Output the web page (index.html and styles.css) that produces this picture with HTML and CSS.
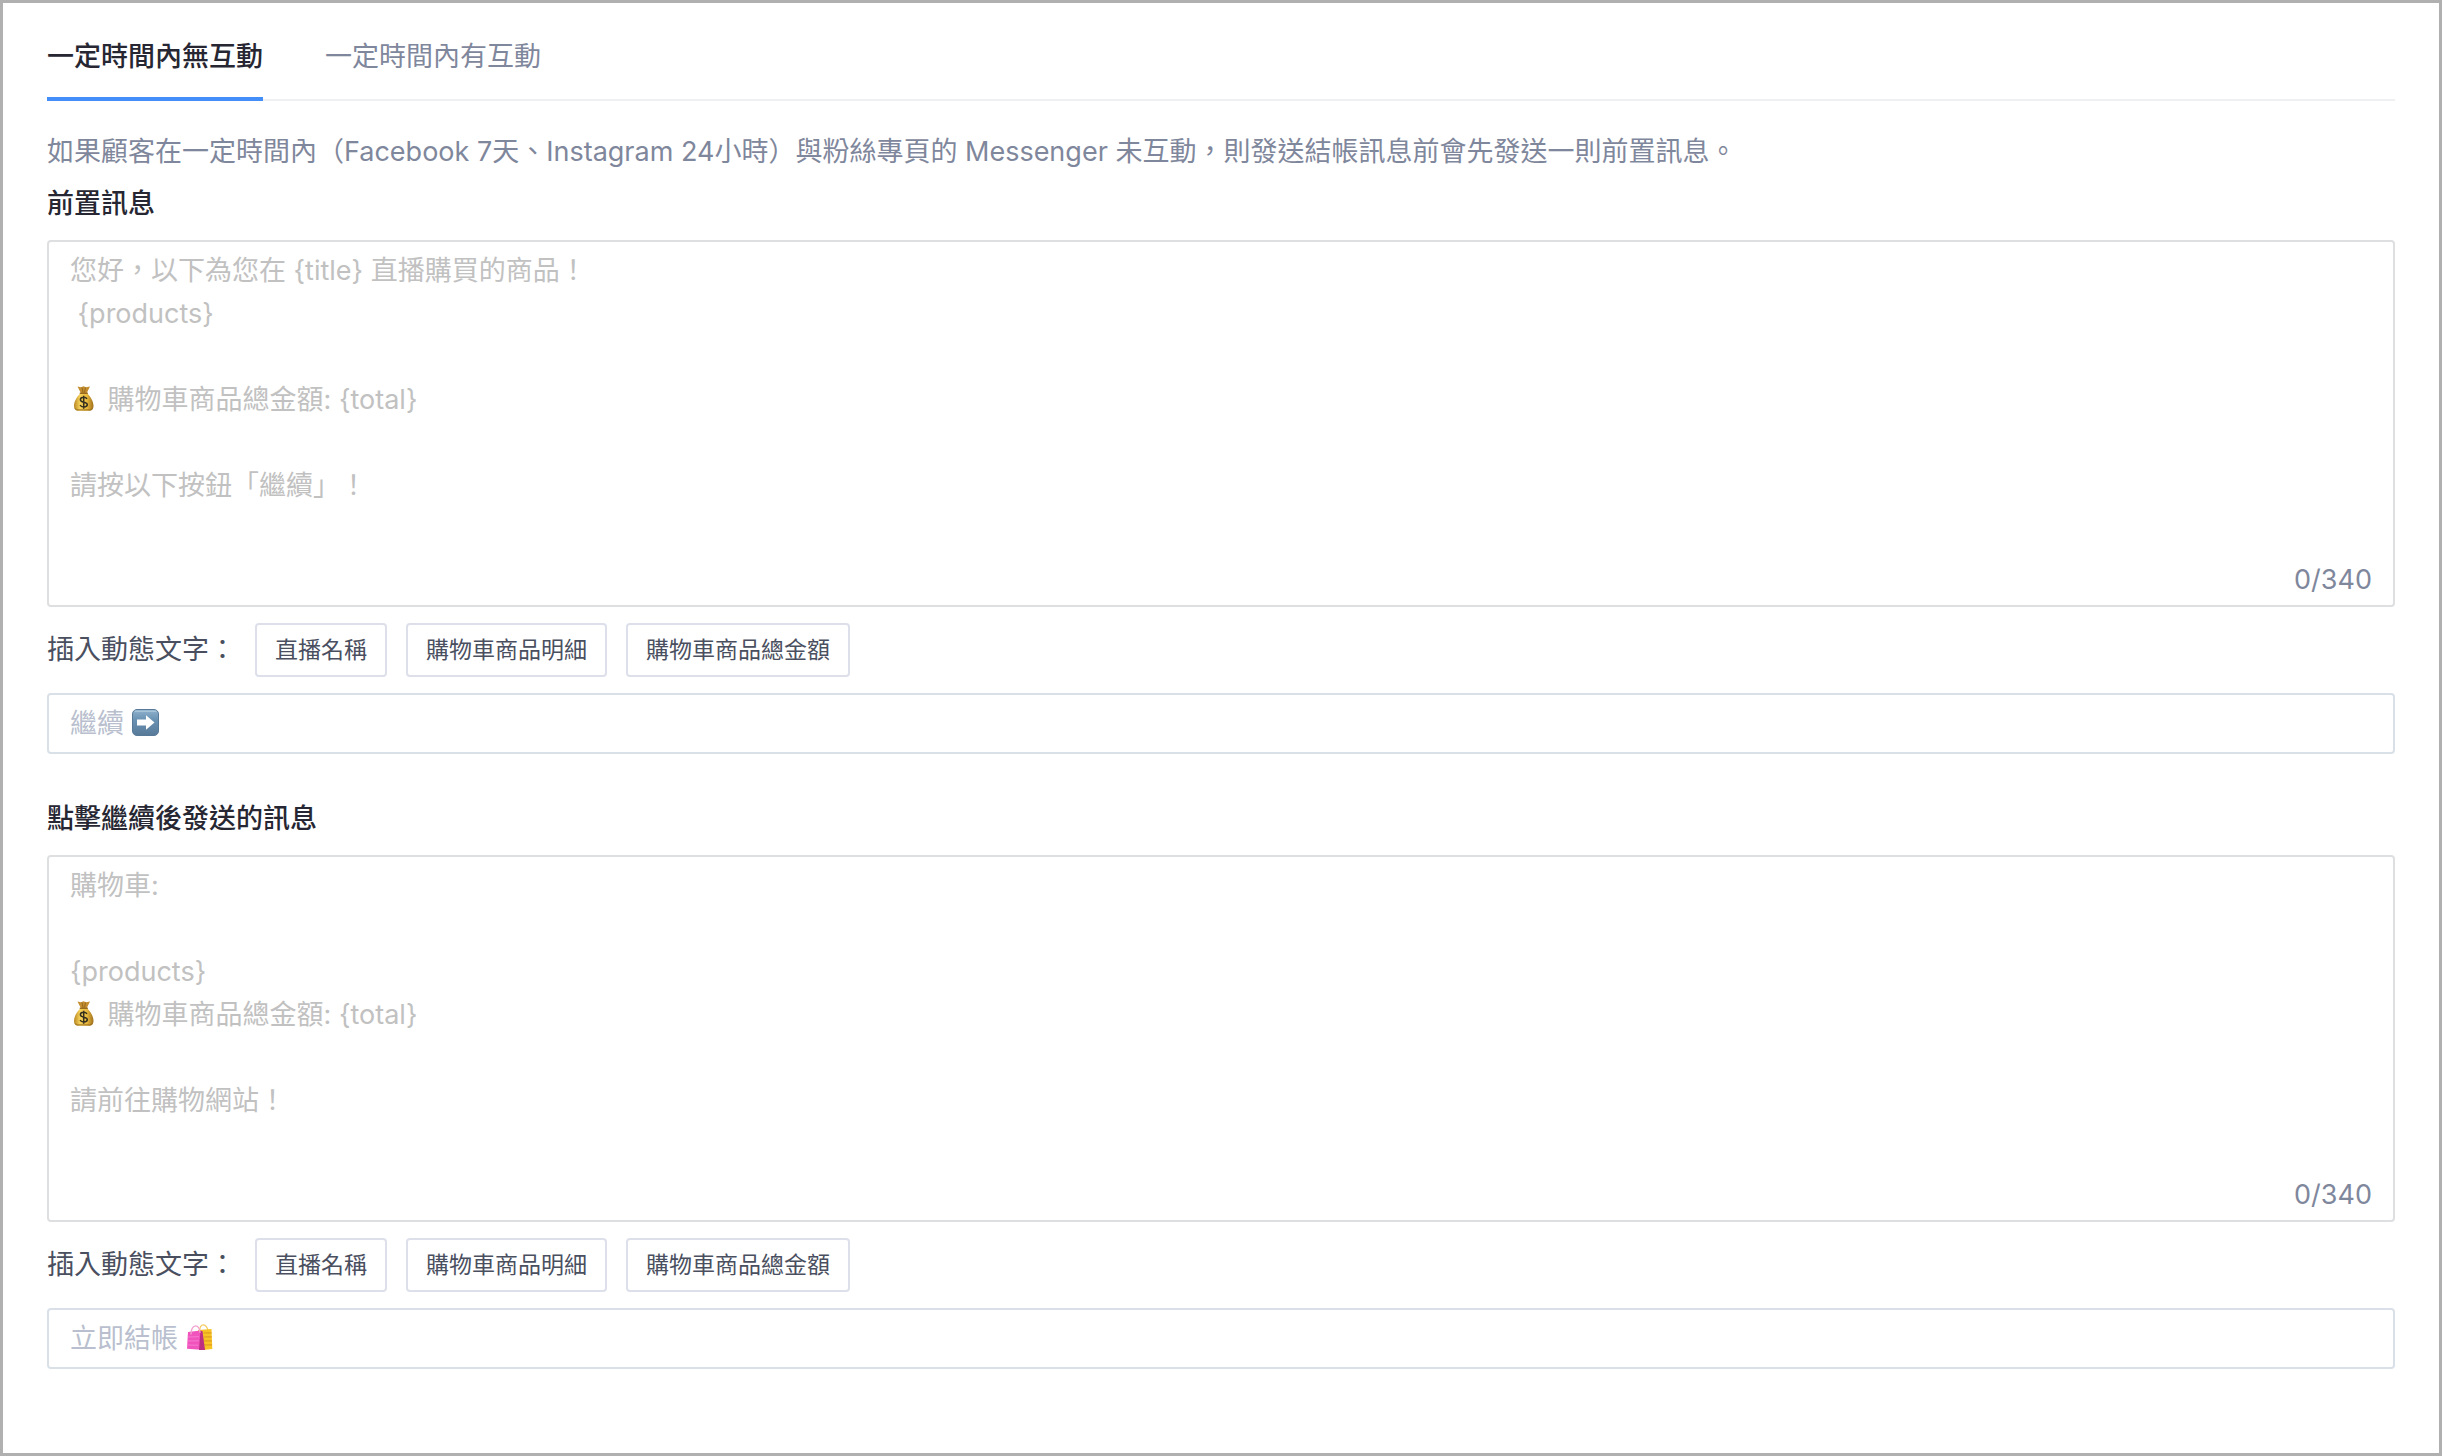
FILE: index.html
```html
<!DOCTYPE html>
<html lang="zh-Hant">
<head>
<meta charset="utf-8">
<meta name="viewport" content="width=device-width, initial-scale=1">
<title>結帳訊息設定</title>
<link rel="stylesheet" href="styles.css">
</head>
<body>
<svg class="sprite" aria-hidden="true">
  <defs>
    <linearGradient id="gold" x1="0" y1="0" x2="1" y2="0">
      <stop offset="0" stop-color="#b88724"/><stop offset=".3" stop-color="#f5d058"/><stop offset=".65" stop-color="#ebbb3e"/><stop offset="1" stop-color="#a0701c"/>
    </linearGradient>
    <linearGradient id="steel" x1="0" y1="0" x2="0" y2="1">
      <stop offset="0" stop-color="#8fb2cd"/><stop offset=".4" stop-color="#6a92b3"/><stop offset="1" stop-color="#587a99"/>
    </linearGradient>
    <symbol id="money-bag" viewBox="0 0 27 27">
      <path d="M7.500 1.500 11 2.200l2.500-1 2.500 1 4-.8-3.200 6.600h-6z" fill="#c48e30"/>
      <path d="M12 2.500 13 7.500M15.500 2.500 14.500 7.500" stroke="#8a5f1a" stroke-width=".8"/>
      <path d="M10.300 8.500h7c3.200 3 6.200 8 6.200 12.300 0 3.700-2 5-4.700 5H8.700c-2.700 0-4.700-1.300-4.700-5 0-4.300 3.100-9.300 6.300-12.300z" fill="url(#gold)"/>
      <path d="M4.300 22.500c.6 2.600 2.200 3.300 4.400 3.300h10.100c2.200 0 3.800-.7 4.400-3.300-1.500 1.200-3 1.500-4.400 1.500H8.700c-1.400 0-2.900-.3-4.400-1.500z" fill="#8b5d16" opacity=".5"/>
      <path d="M10.300 8.300h7" stroke="#9a6a1e" stroke-width="1.400" stroke-linecap="round"/>
      <path d="M17 14c-.6-1.100-1.700-1.700-3.300-1.700-1.900 0-3.300.9-3.300 2.400 0 3.400 6.900 1.500 6.900 4.900 0 1.500-1.500 2.400-3.500 2.400-1.800 0-3.100-.7-3.700-2M13.700 10.700v13" fill="none" stroke="#35301f" stroke-width="1.500"/>
    </symbol>
    <symbol id="arrow-right" viewBox="0 0 27 27">
      <rect x=".5" y=".5" width="26" height="26" rx="4.500" fill="url(#steel)" stroke="#587a98"/>
      <path d="M3 2.200h21" stroke="#b5cee0" stroke-linecap="round"/>
      <path d="M5 10.500h9V6.200l8.500 7.300-8.500 7.300v-4.300H5z" fill="#fff"/>
    </symbol>
    <symbol id="shopping-bags" viewBox="0 0 27 27">
      <path d="M13.500 7c.3-4 2-6.300 4-6.200 2.200.1 4 2.800 4.300 5.200" fill="none" stroke="#f4cc63" stroke-width="1.300"/>
      <path d="m12 6 13.500-1 .8 20L17 26z" fill="#f7c325"/>
      <path d="m17.500 9 8-.2M18 13l7.600-.2M18 17l7.800-.2M18 21l8-.2" stroke="#dd9b20" stroke-width="1.200"/>
      <path d="m2 8 12.500-1.500L18.500 26 1 24.800z" fill="#f153bd"/>
      <path d="m14.500 6.500 2 .8L19 26h-6z" fill="#bd2f83"/>
      <path d="M5 10.500C5 5 7 1.800 9.600 1.800c2.400 0 4 2.700 4.400 7" fill="none" stroke="#f2a0cf" stroke-width="1.300"/>
      <path d="m2 13 11-.3M2 17l11-.2M1.500 21l11 .2" stroke="#f779cf" stroke-width="1"/>
    </symbol>
  </defs>
</svg>

<main class="panel">
  <div class="tabs" role="tablist">
    <button class="tab tab-active" type="button" role="tab" aria-selected="true">一定時間內無互動</button>
    <button class="tab" type="button" role="tab" aria-selected="false">一定時間內有互動</button>
  </div>

  <p class="description">如果顧客在一定時間內（Facebook 7天、Instagram 24小時）與粉絲專頁的 Messenger 未互動，則發送結帳訊息前會先發送一則前置訊息。</p>

  <section class="message">
    <label class="title" for="pre-message">前置訊息</label>
    <div class="field editor">
      <textarea class="control" id="pre-message" rows="8" maxlength="340"></textarea>
      <div class="hint">您好，以下為您在 {title} 直播購買的商品！
 {products}

<svg class="emoji"><use href="#money-bag"/></svg> 購物車商品總金額: {total}

請按以下按鈕「繼續」！</div>
      <span class="counter">0/340</span>
    </div>
    <div class="inserts">
      <span class="inserts-label">插入動態文字：</span>
      <button class="insert" type="button">直播名稱</button>
      <button class="insert" type="button">購物車商品明細</button>
      <button class="insert" type="button">購物車商品總金額</button>
    </div>
    <div class="field line-field">
      <input class="control" type="text" aria-label="繼續按鈕文字">
      <div class="hint">繼續 <svg class="emoji"><use href="#arrow-right"/></svg></div>
    </div>
  </section>

  <section class="message">
    <label class="title" for="next-message">點擊繼續後發送的訊息</label>
    <div class="field editor">
      <textarea class="control" id="next-message" rows="8" maxlength="340"></textarea>
      <div class="hint">購物車:

{products}
<svg class="emoji"><use href="#money-bag"/></svg> 購物車商品總金額: {total}

請前往購物網站！</div>
      <span class="counter">0/340</span>
    </div>
    <div class="inserts">
      <span class="inserts-label">插入動態文字：</span>
      <button class="insert" type="button">直播名稱</button>
      <button class="insert" type="button">購物車商品明細</button>
      <button class="insert" type="button">購物車商品總金額</button>
    </div>
    <div class="field line-field">
      <input class="control" type="text" aria-label="結帳按鈕文字">
      <div class="hint">立即結帳 <svg class="emoji"><use href="#shopping-bags"/></svg></div>
    </div>
  </section>
</main>
</body>
</html>
```
FILE: styles.css
```css
*,
*::before,
*::after {
  box-sizing: border-box;
}

body {
  margin: 0;
  background: #fff;
  color: #4a4f60;
  font-family: Inter, "Noto Sans CJK TC", sans-serif;
  font-size: 27px;
  line-height: 42px;
}

button,
input,
textarea {
  font: inherit;
  color: inherit;
}

.sprite {
  position: absolute;
  width: 0;
  height: 0;
}

.panel {
  min-height: 100vh;
  padding: 33px 44px;
  border: 3px solid #b0b0b1;
}

/* Tabs */
.tabs {
  display: flex;
  gap: 62px;
  border-bottom: 2px solid #eff0f2;
}

.tab {
  margin: 0 0 -2px;
  padding: 0 0 19px;
  border: 0;
  border-bottom: 4px solid transparent;
  background: none;
  color: #7f879c;
  cursor: pointer;
}

.tab-active {
  border-bottom-color: #438ef8;
  color: #262732;
  font-weight: 500;
}

.description {
  margin: 30px 0 11px;
  color: #7f879c;
}

/* Message blocks */
.message {
  display: flex;
  flex-direction: column;
  gap: 16px;
}

.message + .message {
  margin-top: 45px;
}

.title {
  color: #262732;
  font-weight: 500;
  line-height: 40px;
}

/* The hint and the counter share the control's grid cell */
.field {
  display: grid;
  border: 2px solid #dedfe0;
  border-radius: 4px;
}

.field > * {
  grid-area: 1 / 1;
}

.field:focus-within {
  border-color: #438ef8;
}

.control {
  display: block;
  width: 100%;
  margin: 0;
  padding: 7px 21px;
  border: 0;
  outline: 0;
  background: none;
  resize: none;
}

.hint {
  padding: 7px 21px;
  color: #c1c1c1;
  white-space: pre-wrap;
  pointer-events: none;
}

.editor .control {
  padding-bottom: 12px;
}

.field .control,
.field .hint {
  line-height: 43px;
}

.control:focus + .hint {
  opacity: 0;
}

.counter {
  place-self: end;
  padding: 4px 21px;
  color: #7f879c;
  pointer-events: none;
}

.line-field {
  border-color: #dae0e8;
}

.line-field .hint {
  color: #b9bfce;
}

.emoji {
  width: 27px;
  height: 27px;
  margin-right: 3px;
  vertical-align: -3px;
}

/* Dynamic text buttons */
.inserts {
  display: flex;
  flex-wrap: wrap;
  align-items: center;
  gap: 19px;
}

.insert {
  padding: 4px 18px;
  border: 2px solid #dde0ea;
  border-radius: 4px;
  background: #fff;
  font-size: 23px;
  cursor: pointer;
}
```
